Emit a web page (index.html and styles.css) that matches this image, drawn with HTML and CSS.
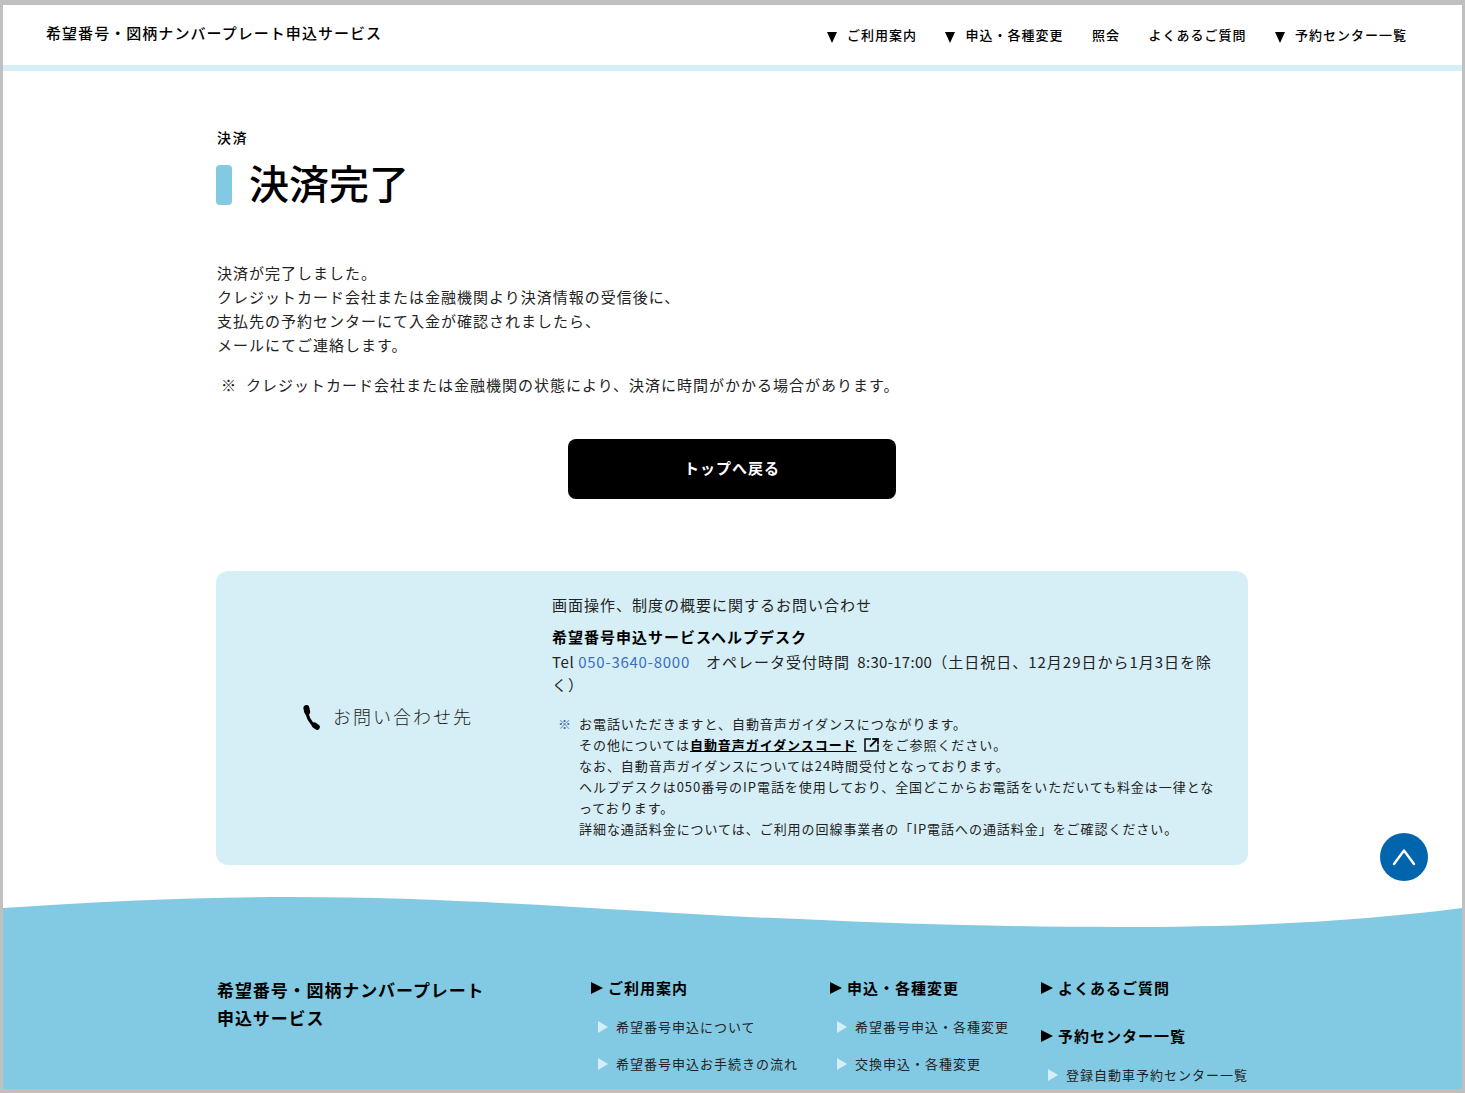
FILE: index.html
```html
<!DOCTYPE html>
<html lang="ja">
<head>
<meta charset="utf-8">
<title>決済完了</title>
<link rel="stylesheet" href="styles.css">
</head>
<body>
<div class="frame">
  <header class="site-header">
    <div class="site-title">希望番号・図柄ナンバープレート申込サービス</div>
    <nav class="site-nav">
      <a class="nav-item has-menu">ご利用案内</a>
      <a class="nav-item has-menu">申込・各種変更</a>
      <a class="nav-item">照会</a>
      <a class="nav-item">よくあるご質問</a>
      <a class="nav-item has-menu">予約センター一覧</a>
    </nav>
  </header>

  <main class="main">
    <div class="crumb">決済</div>
    <h1 class="page-title"><span class="title-bar"></span>決済完了</h1>
    <p class="lead">決済が完了しました。<br>クレジットカード会社または金融機関より決済情報の受信後に、<br>支払先の予約センターにて入金が確認されましたら、<br>メールにてご連絡します。</p>
    <p class="note"><span class="note-mark">※</span><span>クレジットカード会社または金融機関の状態により、決済に時間がかかる場合があります。</span></p>
    <div class="actions"><a class="btn-top">トップへ戻る</a></div>

    <section class="contact">
      <div class="contact-label">
        <svg class="phone-icon" width="17" height="25" viewBox="0 0 17 25" aria-hidden="true">
          <path d="M4 4 C3.5 11 7 18 13 22" fill="none" stroke="#000" stroke-width="3.2"/>
          <path d="M3.4 3 L4.2 7" fill="none" stroke="#000" stroke-width="6" stroke-linecap="round"/>
          <path d="M11.5 20.2 L14 22" fill="none" stroke="#000" stroke-width="5.6" stroke-linecap="round"/>
        </svg>
        <span>お問い合わせ先</span>
      </div>
      <div class="contact-body">
        <p class="contact-intro">画面操作、制度の概要に関するお問い合わせ</p>
        <p class="contact-name">希望番号申込サービスヘルプデスク</p>
        <p class="contact-tel"><span class="tel-label">Tel </span><a class="tel-link">050-3640-8000</a>　オペレータ受付時間 <span class="hours">8:30-17:00</span>（土日祝日、12月29日から1月3日を除く）</p>
        <div class="contact-note">
          <span class="small-mark">※</span>
          <p class="small-text">お電話いただきますと、自動音声ガイダンスにつながります。<br>その他については<a class="guide-link">自動音声ガイダンスコード</a><svg class="ext-icon" width="15" height="14" viewBox="0 0 15 14" aria-hidden="true"><path d="M7 1 H1 V13 H14 V7" fill="none" stroke="#111" stroke-width="1.6"/><path d="M6 8.5 L13 1.5 M8.2 1 H14 V6.5" fill="none" stroke="#111" stroke-width="1.8"/></svg>をご参照ください。<br>なお、自動音声ガイダンスについては24時間受付となっております。<br>ヘルプデスクは050番号のIP電話を使用しており、全国どこからお電話をいただいても料金は一律となっております。<br>詳細な通話料金については、ご利用の回線事業者の「IP電話への通話料金」をご確認ください。</p>
        </div>
      </div>
    </section>
  </main>

  <svg class="wave" width="1459" height="32" viewBox="0 0 1459 32" preserveAspectRatio="none" aria-hidden="true">
    <path d="M0 12 C100 5 190 1 287 1 C480 1 640 18 797 23 C900 28 1010 31 1115 31 C1240 31 1350 26 1459 12 V32 H0 Z" fill="#82cae3"/>
  </svg>
  <footer class="site-footer">
    <div class="footer-title">希望番号・図柄ナンバープレート<br>申込サービス</div>
    <div class="footer-col">
      <div class="footer-head">ご利用案内</div>
      <a class="footer-link">希望番号申込について</a>
      <a class="footer-link">希望番号申込お手続きの流れ</a>
    </div>
    <div class="footer-col">
      <div class="footer-head">申込・各種変更</div>
      <a class="footer-link">希望番号申込・各種変更</a>
      <a class="footer-link">交換申込・各種変更</a>
    </div>
    <div class="footer-col">
      <div class="footer-head">よくあるご質問</div>
      <div class="footer-head footer-head-next">予約センター一覧</div>
      <a class="footer-link">登録自動車予約センター一覧</a>
    </div>
  </footer>

  <a class="to-top" aria-label="ページトップへ">
    <svg width="24" height="18" viewBox="0 0 24 18" aria-hidden="true"><path d="M2 16 L12 2.5 L22 16" fill="none" stroke="#fff" stroke-width="2.4" stroke-linejoin="round" stroke-linecap="round"/></svg>
  </a>
</div>
</body>
</html>
```
FILE: styles.css
```css
* { box-sizing: border-box; }
html, body { margin: 0; padding: 0; height: 100%; background: #c0c0c0; overflow: hidden; }
body {
  font-family: "Noto Sans CJK JP", "Noto Sans", sans-serif;
  color: #111;
  padding: 5px 3px 4px;
}
p, h1 { margin: 0; }
a { color: inherit; text-decoration: none; }

.frame {
  position: relative;
  width: 1459px;
  height: 1084px;
  background: #fff;
  overflow: hidden;
}

.site-header {
  display: flex;
  justify-content: space-between;
  height: 66px;
  padding: 17px 55px 0 43px;
  background: #fff;
  border-bottom: 6px solid #d6eef6;
}
.site-title { font-size: 15px; line-height: 22px; letter-spacing: 1.05px; font-weight: 500; color: #000; }
.site-nav { display: flex; gap: 28.5px; margin-top: 2px; }
.nav-item {
  display: flex;
  align-items: center;
  height: 20px;
  font-size: 13px;
  letter-spacing: 1px;
  font-weight: 500;
  color: #000;
}
.has-menu::before {
  content: "";
  margin: 6px 10px 0 0;
  border-left: 5.5px solid transparent;
  border-right: 5.5px solid transparent;
  border-top: 11px solid #000;
}

.main { width: 1032px; margin-left: 213px; padding-top: 56px; }
.crumb { font-size: 14px; line-height: 21px; letter-spacing: 1.5px; font-weight: 500; color: #000; padding-left: 1px; }
.page-title {
  display: flex;
  align-items: flex-start;
  height: 40px;
  margin-top: 17px;
  font-size: 40px;
  line-height: 34px;
  font-weight: 500;
  color: #000;
}
.title-bar { width: 16px; height: 40px; margin-right: 17px; border-radius: 4px; background: #82cae3; }

.lead { margin-top: 56px; padding-left: 1px; font-size: 15px; line-height: 24px; letter-spacing: 1px; color: #222; }
.note { display: flex; margin-top: 16px; padding-left: 5px; font-size: 15px; line-height: 24px; letter-spacing: 1px; color: #222; }
.note-mark { width: 25px; }

.actions { display: flex; justify-content: center; margin-top: 42px; }
.btn-top {
  display: flex;
  align-items: center;
  justify-content: center;
  width: 328px;
  height: 60px;
  padding-bottom: 4px;
  border-radius: 8px;
  background: #000;
  color: #fff;
  font-size: 15px;
  letter-spacing: 1px;
  font-weight: 700;
}

.contact {
  display: grid;
  grid-template-columns: 336px 1fr;
  height: 294px;
  margin-top: 72px;
  border-radius: 12px;
  background: #d6eef6;
}
.contact-label {
  display: flex;
  align-items: center;
  justify-content: center;
  gap: 13px;
  padding: 0 0 4px 8px;
  font-size: 18px;
  letter-spacing: 2px;
  font-weight: 300;
  color: #222;
}
.phone-icon { margin-top: 2px; }
.contact-body { padding: 22px 32px 0 0; font-size: 15px; color: #222; letter-spacing: 1px; }
.contact-intro { line-height: 24px; }
.contact-name { margin-top: 7px; line-height: 26px; font-weight: 700; color: #000; }
.contact-tel { line-height: 23px; }
.tel-label { letter-spacing: 0.6px; }
.hours { letter-spacing: 0.3px; margin-left: 3px; }
.tel-link { color: #3a6fc4; letter-spacing: 0.75px; }

.contact-note { display: flex; margin-top: 17px; padding-left: 6px; font-size: 13px; line-height: 21px; letter-spacing: 0.95px; }
.small-mark { flex: none; width: 21px; color: #3a6a9a; }
.small-text { flex: 1; }
.guide-link { font-weight: 700; color: #000; text-decoration: underline; }
.ext-icon { margin: 0 3px 0 7px; vertical-align: -2px; }

.wave { display: block; margin-top: 31px; }
.site-footer {
  display: grid;
  grid-template-columns: 374px 239px 211px 1fr;
  height: 162px;
  padding: 49px 0 0 214px;
  background: #82cae3;
  margin-top: -1px;
}
.footer-title { font-size: 17px; line-height: 27.5px; letter-spacing: 0.9px; font-weight: 700; color: #000; }
.footer-col { display: flex; flex-direction: column; align-items: flex-start; }
.footer-head {
  display: flex;
  align-items: center;
  height: 24px;
  padding-bottom: 2px;
  font-size: 15px;
  letter-spacing: 1px;
  font-weight: 700;
  color: #000;
}
.footer-head::before {
  content: "";
  margin: 2px 5px 0 0;
  border-top: 6px solid transparent;
  border-bottom: 6px solid transparent;
  border-left: 12px solid #000;
}
.footer-head-next { margin-top: 24px; }
.footer-link {
  display: flex;
  align-items: center;
  height: 24px;
  margin: 14px 0 -1px 7px;
  font-size: 13px;
  letter-spacing: 1px;
  color: #222;
}
.footer-link::before {
  content: "";
  margin: 1px 8px 0 0;
  border-top: 6px solid transparent;
  border-bottom: 6px solid transparent;
  border-left: 10px solid #d6eef6;
}

.to-top {
  position: absolute;
  left: 1377px;
  top: 828px;
  display: flex;
  align-items: center;
  justify-content: center;
  width: 48px;
  height: 48px;
  border-radius: 50%;
  background: #0065ad;
}
```
